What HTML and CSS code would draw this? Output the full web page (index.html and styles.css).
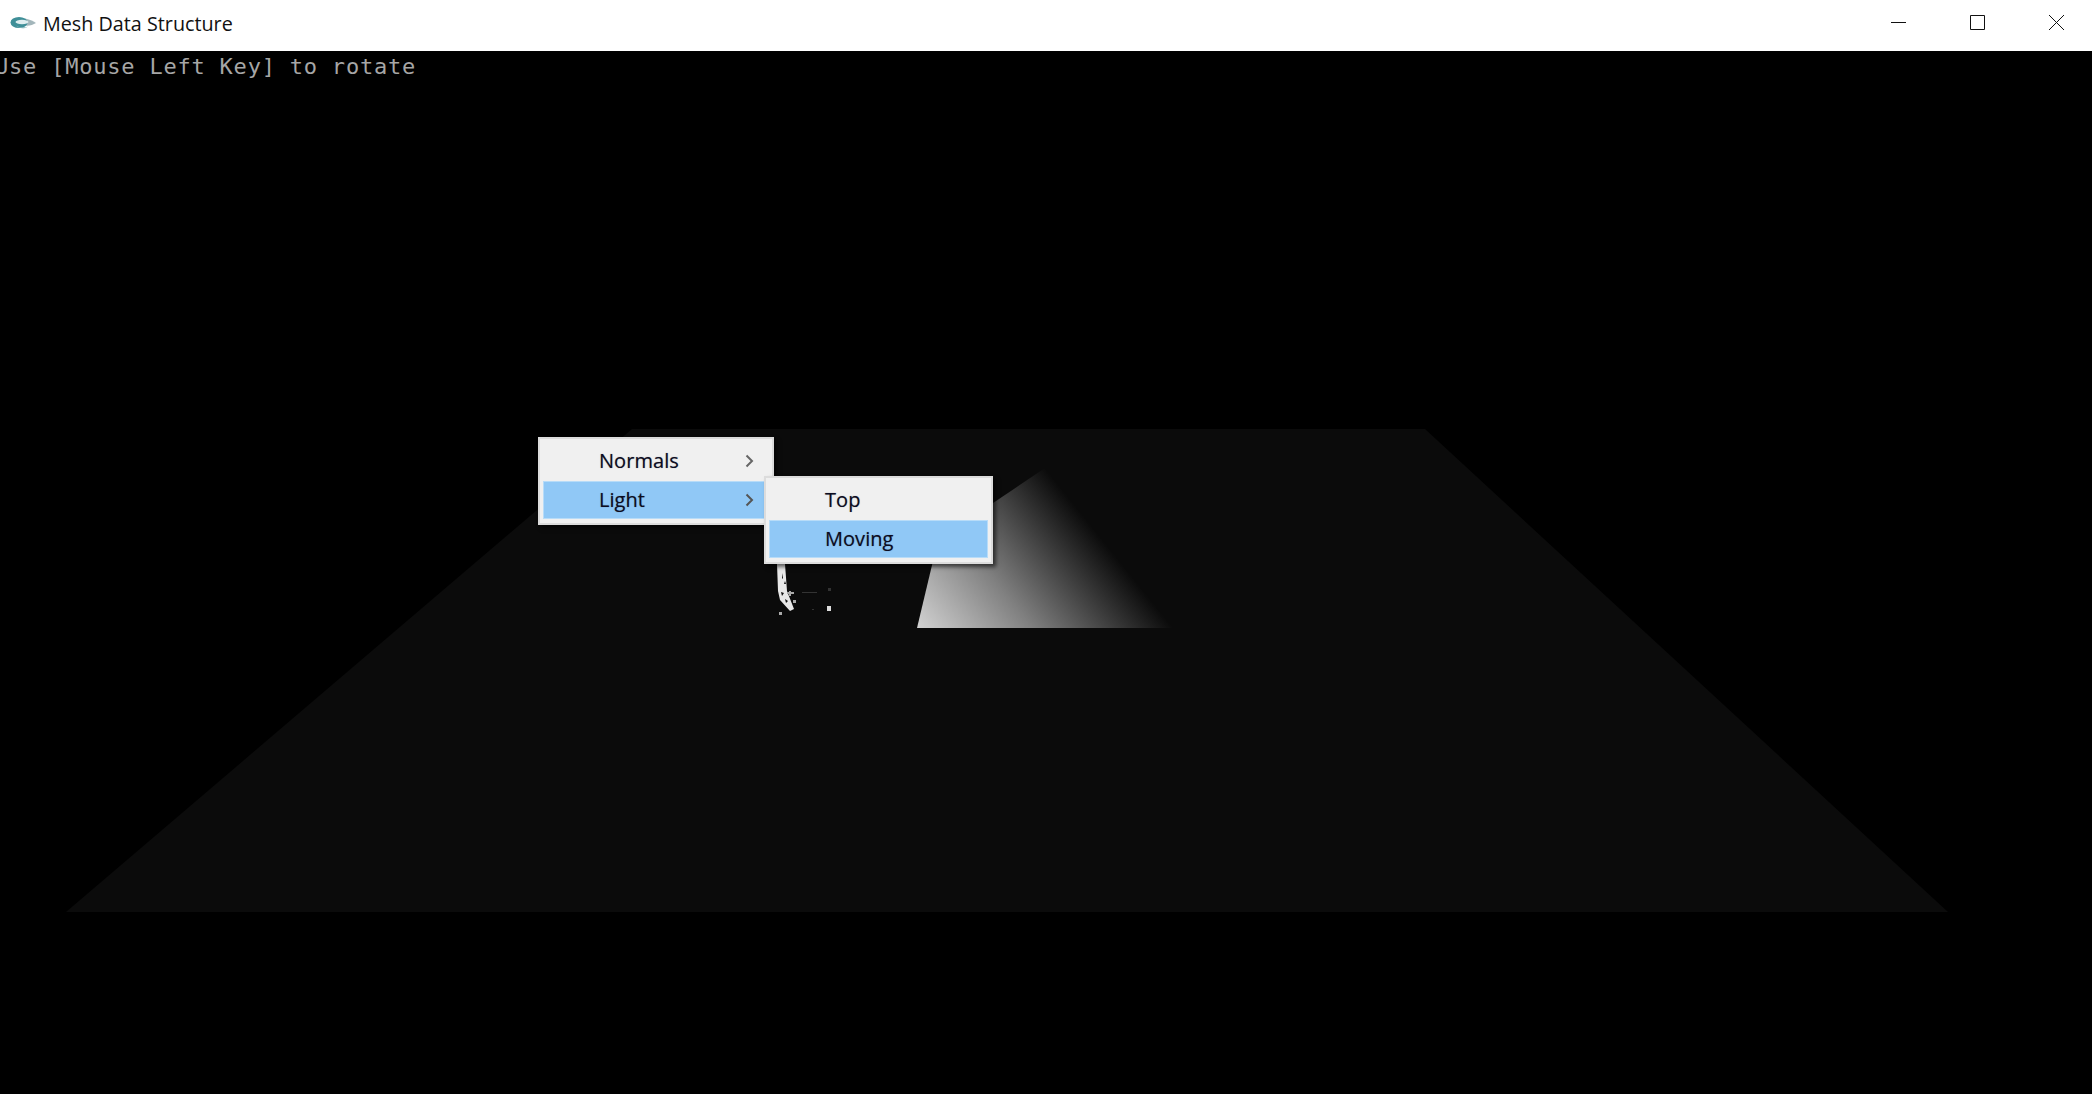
FILE: index.html
```html
<!DOCTYPE html>
<html lang="en">
<head>
<meta charset="utf-8">
<title>Mesh Data Structure</title>
<link rel="stylesheet" href="styles.css">
</head>
<body>
<div class="window">
  <header class="titlebar">
    <svg class="app-icon" viewBox="0 0 27 14" width="27" height="14">
      <path d="M15 2.500c4 .5 8 2.500 11 4.500-3 2-7 3-11 2.500z" fill="#a3b6bb"/>
      <ellipse cx="9" cy="6.500" rx="8.500" ry="5.500" fill="#3f8f98"/>
      <ellipse cx="12" cy="6" rx="6.500" ry="2.200" fill="#dfeef0"/>
      <path d="M6 9.500c3 2 8 2.500 12 1-3 2.500-9 2.500-12-1z" fill="#7fb0b6"/>
    </svg>
    <span class="app-title">Mesh Data Structure</span>
    <div class="controls">
      <svg class="ctl" viewBox="0 0 15 15" width="15" height="15"><path d="M0 7.500h15" stroke="#111" fill="none"/></svg>
      <svg class="ctl" viewBox="0 0 15 15" width="15" height="15"><path d="M.5.500h14v14H.5z" stroke="#111" fill="none"/></svg>
      <svg class="ctl" viewBox="0 0 15 15" width="15" height="15"><path d="M0 0l15 15M15 0L0 15" stroke="#111" fill="none"/></svg>
    </div>
  </header>
  <main class="viewport">
    <svg class="scene" viewBox="0 0 2092 1043" width="2092" height="1043">
      <defs>
        <linearGradient id="shade" gradientUnits="userSpaceOnUse" x1="917" y1="577" x2="1073" y2="452">
          <stop offset="0" stop-color="#d2d2d2"/>
          <stop offset="0.45" stop-color="#808080"/>
          <stop offset="1" stop-color="#0b0b0b"/>
        </linearGradient>
      </defs>
      <polygon points="66,861 632,378 1425,378 1948,861" fill="#0b0b0b"/>
      <polygon points="917,577 938,489 1045,417 1173,577" fill="url(#shade)"/>
      <path d="M777 513h8l2 27 7 18-4 2-10-11-2-9z" fill="#e8e8e8"/>
      <path d="M782 522l1 5-1 1zM785 530l1 3-2 0zM781 541l3 1-2 3zM785 548l3 2-2 2z" fill="#111"/>
      <path d="M802 541h15v1h-15zM828 537h3v3h-3zM812 558h2v1h-2z" fill="#333"/>
      <path d="M789 540h2v5h-2zM787 541h7v2h-7zM793 549h3v3h-3zM779 561h3v3h-3z" fill="#aaa"/>
      <path d="M827 555h4v5h-4z" fill="#ddd"/>
    </svg>
    <p class="hint">Use [Mouse Left Key] to rotate</p>
    <ul class="menu menu-main">
      <li class="item"><span>Normals</span><svg class="chev" viewBox="0 0 9 14" width="9" height="14"><path d="M1.500 1.500l5.500 5.500-5.500 5.500" stroke="#666" stroke-width="2" fill="none"/></svg></li>
      <li class="item active"><span>Light</span><svg class="chev" viewBox="0 0 9 14" width="9" height="14"><path d="M1.500 1.500l5.500 5.500-5.500 5.500" stroke="#555" stroke-width="2" fill="none"/></svg></li>
    </ul>
    <ul class="menu menu-sub">
      <li class="item"><span>Top</span></li>
      <li class="item active"><span>Moving</span></li>
    </ul>
  </main>
</div>
</body>
</html>
```
FILE: styles.css
```css
* { box-sizing: border-box; }
html, body { margin: 0; height: 100%; background: #000; overflow: hidden; }
.window { display: flex; flex-direction: column; height: 1094px; width: 2092px; }
.titlebar { flex: 0 0 51px; background: #fff; display: flex; align-items: center; padding: 0 28px 0 10px; }
.app-icon { margin-top: -6px; margin-right: 6px; flex: none; filter: blur(.6px); }
.app-title { font: 19.75px/26px "Open Sans", "Noto Sans", sans-serif; color: #111; margin-bottom: 3px; }
.controls { margin-left: auto; display: flex; gap: 64px; margin-top: -6px; }
.ctl { display: block; }
.viewport { position: relative; flex: 1; background: #000; overflow: hidden; }
.scene { position: absolute; left: 0; top: 0; display: block; }
.hint { position: absolute; left: -5px; top: 3px; margin: 0; font: 22px/26px "DejaVu Sans Mono", monospace; letter-spacing: .79px; color: #a6a6a6; white-space: nowrap; }
.menu { position: absolute; margin: 0; padding: 3px; list-style: none; background: #f0f0f0; border: 2px solid #dcdcdc; box-shadow: 3px 3px 4px rgba(0,0,0,.6); }
.menu-main { left: 538px; top: 386px; width: 236px; height: 88px; padding-top: 3px; }
.menu-sub { left: 764px; top: 425px; width: 229px; height: 88px; padding-top: 4px; }
.item { display: flex; align-items: center; justify-content: space-between; height: 38px; font: 20px/26px "Open Sans", "Noto Sans", sans-serif; letter-spacing: .05px; color: #0c0c20; text-shadow: 0 0 1px rgba(10,10,40,.45); padding: 0 14px 0 55px; border: 1px solid transparent; }
.item:first-child { padding-bottom: 2px; }
.menu-main .item:first-child { height: 39px; }
.item.active { background: #90c8f6; border-color: #b8dcf8; }
```
